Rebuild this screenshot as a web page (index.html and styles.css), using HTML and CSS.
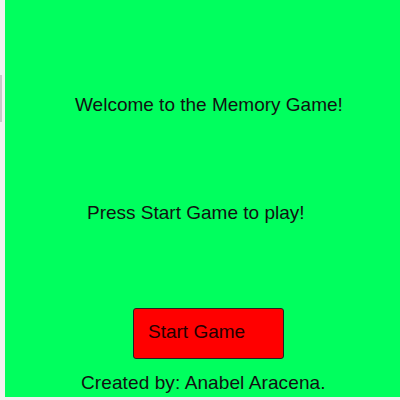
FILE: index.html
```html
<!DOCTYPE html>
<html>
<head>
<meta charset="utf-8">
<link rel="stylesheet" href="styles.css">
</head>
<body>
<div class="page">
  <aside class="edge"><div class="edge-bar"></div></aside>
  <main class="game">
    <p class="welcome">Welcome to the Memory Game!</p>
    <p class="prompt">Press Start Game to play!</p>
    <button class="start">Start Game</button>
    <p class="credit">Created by: Anabel Aracena.</p>
  </main>
</div>
</body>
</html>
```
FILE: styles.css
```css
html, body {
  margin: 0;
  padding: 0;
  background: #f1f1f1;
  overflow: hidden;
}
.page {
  display: flex;
  width: 400px;
  height: 400px;
}
.edge {
  width: 5px;
  flex: none;
}
.edge-bar {
  margin-top: 75px;
  width: 2px;
  height: 47px;
  background: #c9c9c9;
}
.game {
  flex: 1;
  height: 397px;
  background: #00ff5e;
  display: flex;
  flex-direction: column;
  align-items: flex-start;
  font-family: "Liberation Sans", Arial, sans-serif;
  font-size: 19px;
  color: #111;
}
.game p { margin: 0; }
.welcome {
  margin-top: 94px !important;
  margin-left: 70px !important;
}
.prompt {
  margin-top: 86px !important;
  margin-left: 82px !important;
}
.start {
  margin-top: 84px;
  margin-left: 128px;
  width: 151px;
  height: 51px;
  background: #ff0000;
  border: 1px solid #222;
  border-radius: 3px;
  padding: 0 0 3px 14px;
  text-align: left;
  font-family: "Liberation Sans", Arial, sans-serif;
  font-size: 19px;
  color: #220000;
}
.credit {
  margin-top: 13px !important;
  margin-left: 76px !important;
  letter-spacing: 0.1px;
}
```
